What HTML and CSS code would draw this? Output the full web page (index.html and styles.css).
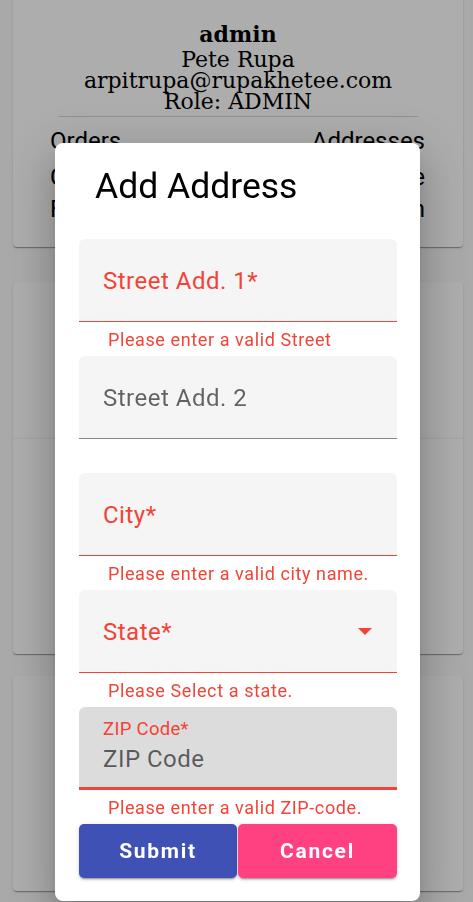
FILE: index.html
```html
<!DOCTYPE html>
<html lang="en">
<head>
<meta charset="utf-8">
<title>Add Address</title>
<link rel="stylesheet" href="styles.css">
</head>
<body>
<main class="page">
  <section class="card profile">
    <h1 class="username">admin</h1>
    <p class="line">Pete Rupa</p>
    <p class="line">arpitrupa@rupakhetee.com</p>
    <p class="line">Role: ADMIN</p>
    <hr class="divider">
    <div class="links">
      <span class="link l1">Orders</span><span class="link l1">Addresses</span>
      <span class="link l2">Cart</span><span class="link l2">Profile</span>
      <span class="link l3">Fav</span><span class="link l3">Admin</span>
    </div>
  </section>
  <section class="card c2"></section>
  <section class="card c3"></section>
  <section class="card c4"></section>
</main>

<div class="backdrop"></div>

<div class="dialog">
  <h2 class="dialog-title">Add Address</h2>
  <form class="form">
    <div class="field invalid">
      <span class="label">Street Add. 1*</span>
    </div>
    <div class="error">Please enter a valid Street</div>

    <div class="field">
      <span class="label muted">Street Add. 2</span>
    </div>
    <div class="error"></div>

    <div class="field invalid">
      <span class="label">City*</span>
    </div>
    <div class="error">Please enter a valid city name.</div>

    <div class="field invalid select">
      <span class="label">State*</span>
      <span class="arrow"></span>
    </div>
    <div class="error">Please Select a state.</div>

    <div class="field invalid focused">
      <span class="float-label">ZIP Code*</span>
      <span class="placeholder">ZIP Code</span>
    </div>
    <div class="error">Please enter a valid ZIP-code.</div>

    <div class="actions">
      <button type="button" class="btn submit">Submit</button>
      <button type="button" class="btn cancel">Cancel</button>
    </div>
  </form>
</div>
</body>
</html>
```

FILE: styles.css
```css
html, body {
  margin: 0;
  padding: 0;
}
body {
  background: #fafafa;
  font-family: Roboto, "Liberation Sans", sans-serif;
  overflow: hidden;
  height: 902px;
}
.page {
  display: flex;
  flex-direction: column;
  padding: 0 10px 0 13px;
}
.card {
  background: #fff;
  border-radius: 4px;
  box-shadow: 0 2px 1px -1px rgba(0,0,0,.2), 0 1px 1px 0 rgba(0,0,0,.14), 0 1px 3px 0 rgba(0,0,0,.12);
  width: 450px;
}
.profile {
  margin-top: -6px;
  padding-top: 27px;
  height: 226px;
  text-align: center;
  font-family: "DejaVu Serif", serif;
  color: #000;
}
.username {
  margin: 0;
  font-size: 22px;
  line-height: 26px;
  font-weight: bold;
  height: 28px;
}
.line {
  margin: 0;
  font-size: 22px;
  line-height: 21px;
  height: 21px;
}
.divider {
  border: 0;
  border-top: 1px solid rgba(0,0,0,.15);
  margin: 4px 45px 0;
}
.links {
  display: grid;
  grid-template-columns: auto auto;
  justify-content: space-between;
  padding: 0 38px 0 37px;
  font-family: Roboto, sans-serif;
  font-size: 24px;
  text-align: left;
}
.link:nth-child(2n) { text-align: right; }
.l1 { padding-top: 9px; line-height: 30px; }
.l2 { padding-top: 6px; line-height: 30px; }
.l3 { padding-top: 2px; line-height: 30px; }

.c2 { margin-top: 35px; height: 156px; border-radius: 4px 4px 0 0; }
.c3 { height: 215px; border-top: 1px solid rgba(0,0,0,.05); border-radius: 0 0 4px 4px; }
.c4 { margin-top: 22px; height: 215px; }

.backdrop {
  position: fixed;
  inset: 0;
  background: rgba(0,0,0,.32);
}

.dialog {
  position: absolute;
  left: 55px;
  top: 143px;
  width: 365px;
  height: 758px;
  box-sizing: border-box;
  padding: 22px 23px 0 24px;
  background: #fff;
  border-radius: 8px;
  box-shadow: 0 11px 15px -7px rgba(0,0,0,.2), 0 24px 38px 3px rgba(0,0,0,.14), 0 9px 46px 8px rgba(0,0,0,.12);
}
.dialog-title {
  margin: 0 0 32px;
  padding-left: 16px;
  font-size: 35.5px;
  line-height: 42px;
  font-weight: 400;
  color: #000;
}
.form {
  display: flex;
  flex-direction: column;
}
.field {
  position: relative;
  height: 83px;
  box-sizing: border-box;
  background: #f5f5f5;
  border-radius: 6px 6px 0 0;
  border-bottom: 1px solid rgba(0,0,0,.45);
  display: flex;
  align-items: center;
  padding: 0 24px;
}
.field.invalid { border-bottom-color: #f44336; }
.label {
  font-size: 24px;
  letter-spacing: 0.5px;
  color: #f44336;
  padding-top: 2px;
}
.label.muted { color: rgba(0,0,0,.6); }
.select { justify-content: space-between; }
.arrow {
  width: 0;
  height: 0;
  border-left: 7px solid transparent;
  border-right: 7px solid transparent;
  border-top: 7px solid #f44336;
  margin-right: 1px;
  margin-top: 1px;
}
.field.focused {
  background: #dcdcdc;
  border-bottom-width: 3px;
  flex-direction: column;
  align-items: flex-start;
  justify-content: flex-start;
  padding-top: 11px;
}
.float-label {
  font-size: 18.5px;
  line-height: 22px;
  letter-spacing: 0.3px;
  color: #f44336;
}
.placeholder {
  margin-top: 4px;
  font-size: 24px;
  line-height: 30px;
  letter-spacing: 0.5px;
  color: rgba(0,0,0,.6);
}
.error {
  height: 34px;
  box-sizing: border-box;
  padding: 7px 0 0 29px;
  font-size: 18px;
  line-height: 22px;
  letter-spacing: 0.6px;
  color: #f44336;
}
.actions {
  display: grid;
  grid-template-columns: 158px 159px;
  gap: 1px;
}
.btn {
  height: 54px;
  border: 0;
  border-radius: 5px;
  color: #fff;
  font-family: Roboto, sans-serif;
  font-weight: 700;
  font-size: 21px;
  letter-spacing: 1.7px;
  box-shadow: 0 3px 1px -2px rgba(0,0,0,.2), 0 2px 2px 0 rgba(0,0,0,.14), 0 1px 5px 0 rgba(0,0,0,.12);
}
.submit { background: #3f51b5; }
.cancel { background: #ff4081; }
```
